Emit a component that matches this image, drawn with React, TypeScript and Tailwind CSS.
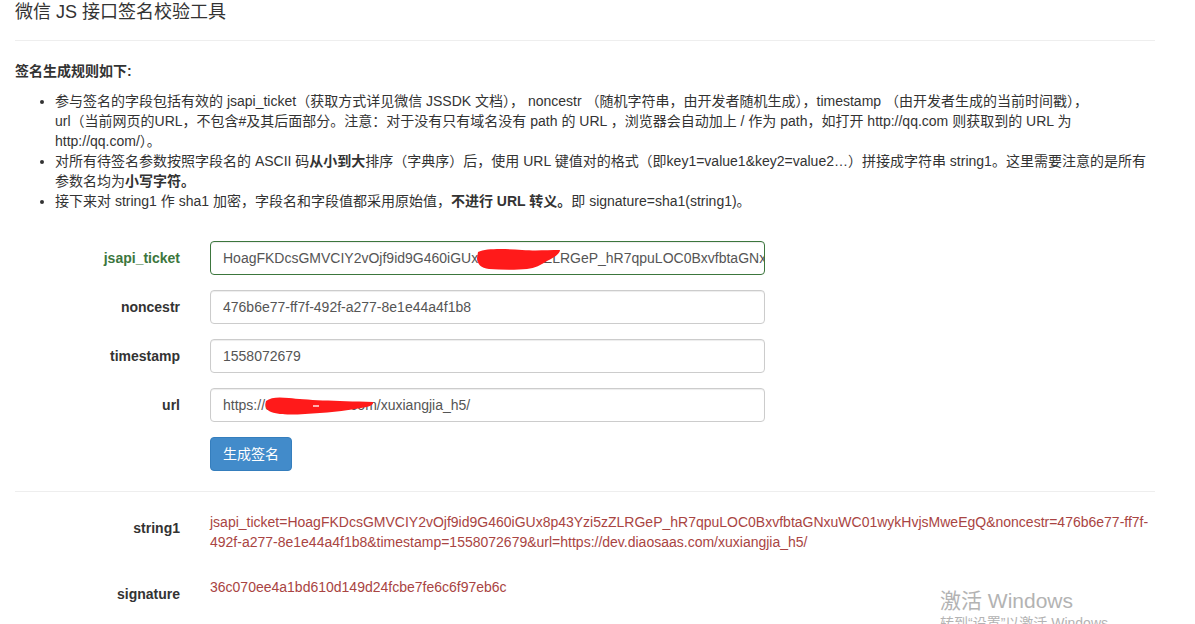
import React from "react";

const FONT = { fontFamily: '"Liberation Sans", "Noto Sans CJK SC", Arial, sans-serif' };

function Field({
  label,
  value,
  success,
  children,
}: {
  label: string;
  value: string;
  success?: boolean;
  children?: React.ReactNode;
}) {
  return (
    <div className="flex mb-[15px]">
      <div
        className={`w-[195px] shrink-0 pr-[15px] pt-[7px] text-right font-bold text-[14px] leading-[20px] ${
          success ? "text-[#3c763d]" : "text-[#333]"
        }`}
      >
        {label}
      </div>
      <div className="w-[585px] px-[15px]">
        <div
          className={`relative h-[34px] rounded-[4px] border px-[12px] py-[6px] text-[14px] leading-[20px] text-[#555] whitespace-nowrap overflow-hidden bg-white shadow-[inset_0_1px_1px_rgba(0,0,0,0.075)] ${
            success ? "border-[#3c763d]" : "border-[#ccc]"
          }`}
        >
          {value}
          {children}
        </div>
      </div>
    </div>
  );
}

export default function App() {
  return (
    <div className="relative w-[1195px] h-[624px] overflow-hidden bg-white text-[#333]" style={FONT}>
      <div className="w-[1170px] px-[15px]">
        <div className="text-[18px] leading-[24px] text-[#333]">微信 JS 接口签名校验工具</div>
        <div className="mt-[16px] border-t border-[#eee]" />
        <div className="mt-[20px] text-[14px] leading-[20px] font-bold">签名生成规则如下:</div>
        <ul className="mt-[10px] list-disc pl-[40px] text-[14px] leading-[20px] text-[#333]">
          <li className="whitespace-nowrap">
            参与签名的字段包括有效的 jsapi_ticket（获取方式详见微信 JSSDK 文档）， noncestr （随机字符串，由开发者随机生成），timestamp （由开发者生成的当前时间戳），
            <br />
            url（当前网页的URL，不包含#及其后面部分。注意：对于没有只有域名没有 path 的 URL ，浏览器会自动加上 / 作为 path，如打开 http://qq.com 则获取到的 URL 为
            <br />
            http://qq.com/）。
          </li>
          <li className="whitespace-nowrap">
            对所有待签名参数按照字段名的 ASCII 码<b>从小到大</b>排序（字典序）后，使用 URL 键值对的格式（即key1=value1&amp;key2=value2…）拼接成字符串 string1。这里需要注意的是所有
            <br />
            参数名均为<b>小写字符。</b>
          </li>
          <li className="whitespace-nowrap">
            接下来对 string1 作 sha1 加密，字段名和字段值都采用原始值，<b>不进行 URL 转义。</b>即 signature=sha1(string1)。
          </li>
        </ul>

        <div className="-mx-[15px] mt-[30px]">
          <Field
            label="jsapi_ticket"
            value="HoagFKDcsGMVCIY2vOjf9id9G460iGUx8p43Yzi5zZLRGeP_hR7qpuLOC0BxvfbtaGNxuWC01wykHvjsMweEgQ"
            success
          >
            <svg className="absolute left-[266px] top-[6px]" width="84" height="23" viewBox="0 0 84 23">
              <path
                d="M1 4 C10 0 30 1 45 2 C60 3 70 2 83 2 C83 6 76 10 70 13 C64 17 58 20 50 21 C40 22 25 22 12 21 C4 20 0 16 0 10 Z"
                fill="#ff1a1a"
              />
            </svg>
          </Field>
          <Field label="noncestr" value="476b6e77-ff7f-492f-a277-8e1e44a4f1b8" />
          <Field label="timestamp" value="1558072679" />
          <Field label="url" value="https://dev.diaosaas.com/xuxiangjia_h5/">
            <svg className="absolute left-[54px] top-[8px]" width="110" height="19" viewBox="0 0 110 19">
              <path
                d="M1 4 C6 0 14 0 24 1 C40 3 70 4 108 5 C109 8 104 10 96 11 C80 14 60 16 40 17 C25 18 12 18 4 14 C0 11 0 7 1 4 Z"
                fill="#ff1a1a"
              />
              <rect x="48" y="8" width="6" height="2" fill="#ffb0b0" />
            </svg>
          </Field>
          <div className="flex">
            <div className="w-[195px] shrink-0" />
            <div className="px-[15px]">
              <button className="h-[34px] w-[82px] rounded-[4px] border border-[#357ebd] bg-[#428bca] text-[14px] leading-[20px] text-white">
                生成签名
              </button>
            </div>
          </div>
        </div>

        <div className="mt-[20px] border-t border-[#eee]" />

        <div className="-mx-[15px] mt-[20px]">
          <div className="flex mb-[25px]">
            <div className="w-[195px] shrink-0 pr-[15px] pt-[6px] text-right font-bold text-[14px] leading-[20px] text-[#333]">
              string1
            </div>
            <div className="w-[975px] px-[15px] text-[14px] leading-[20px] text-[#a94442]">
              <div className="whitespace-nowrap">
                jsapi_ticket=HoagFKDcsGMVCIY2vOjf9id9G460iGUx8p43Yzi5zZLRGeP_hR7qpuLOC0BxvfbtaGNxuWC01wykHvjsMweEgQ&amp;noncestr=476b6e77-ff7f-
              </div>
              <div className="whitespace-nowrap">
                492f-a277-8e1e44a4f1b8&amp;timestamp=1558072679&amp;url=https://dev.diaosaas.com/xuxiangjia_h5/
              </div>
            </div>
          </div>
          <div className="flex">
            <div className="w-[195px] shrink-0 pr-[15px] pt-[7px] text-right font-bold text-[14px] leading-[20px] text-[#333]">
              signature
            </div>
            <div className="w-[975px] px-[15px] text-[14px] leading-[20px] text-[#a94442]">
              36c070ee4a1bd610d149d24fcbe7fe6c6f97eb6c
            </div>
          </div>
        </div>
      </div>

      <div className="absolute left-[940px] top-[588px] text-[#b3b3b3] pointer-events-none">
        <div className="text-[21px] leading-[26px]">激活 Windows</div>
        <div className="text-[14px] leading-[18px]">转到“设置”以激活 Windows。</div>
      </div>
    </div>
  );
}
